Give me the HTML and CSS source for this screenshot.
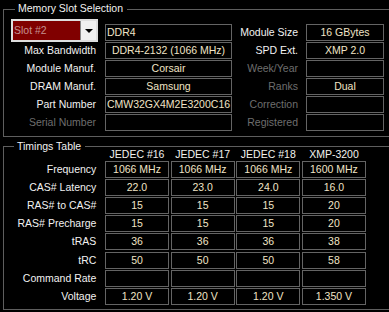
FILE: index.html
```html
<!DOCTYPE html>
<html lang="en">

<head>
    <meta charset="UTF-8">
    <meta name="viewport" content="width=device-width, initial-scale=1.0">
    <title>SPD</title>
    <link rel="stylesheet" href="styles.css">
</head>

<body>
    <!-- 内存插槽 -->
    <div class="group slot-group">
        <span class="group-title">Memory Slot Selection</span>
        <div class="slot-grid">
            <div class="slot-select">
                <span class="slot-value">Slot #2</span>
                <span class="slot-button"><span class="arrow"></span></span>
            </div>
            <div class="field align-left">DDR4</div>
            <div class="label">Module Size</div>
            <div class="field">16 GBytes</div>

            <div class="label">Max Bandwidth</div>
            <div class="field">DDR4-2132 (1066 MHz)</div>
            <div class="label">SPD Ext.</div>
            <div class="field">XMP 2.0</div>

            <div class="label">Module Manuf.</div>
            <div class="field">Corsair</div>
            <div class="label disabled">Week/Year</div>
            <div class="field"></div>

            <div class="label">DRAM Manuf.</div>
            <div class="field">Samsung</div>
            <div class="label disabled">Ranks</div>
            <div class="field">Dual</div>

            <div class="label">Part Number</div>
            <div class="field">CMW32GX4M2E3200C16</div>
            <div class="label disabled">Correction</div>
            <div class="field"></div>

            <div class="label disabled">Serial Number</div>
            <div class="field"></div>
            <div class="label disabled">Registered</div>
            <div class="field"></div>
        </div>
    </div>

    <!-- 时序表 -->
    <div class="group timing-group">
        <span class="group-title">Timings Table</span>
        <div class="timing-grid" id="timing-grid">
            <div></div>
            <div class="col-head">JEDEC #16</div>
            <div class="col-head">JEDEC #17</div>
            <div class="col-head">JEDEC #18</div>
            <div class="col-head">XMP-3200</div>
        </div>
    </div>

    <script>
        const timings = [
            ["Frequency", "1066 MHz", "1066 MHz", "1066 MHz", "1600 MHz"],
            ["CAS# Latency", "22.0", "23.0", "24.0", "16.0"],
            ["RAS# to CAS#", "15", "15", "15", "20"],
            ["RAS# Precharge", "15", "15", "15", "20"],
            ["tRAS", "36", "36", "36", "38"],
            ["tRC", "50", "50", "50", "58"],
            ["Command Rate", "", "", "", ""],
            ["Voltage", "1.20 V", "1.20 V", "1.20 V", "1.350 V"]
        ];

        const grid = document.getElementById('timing-grid');
        timings.forEach(row => {
            row.forEach((text, i) => {
                const cell = document.createElement('div');
                cell.classList.add(i === 0 ? 'label' : 'field');
                cell.textContent = text;
                grid.appendChild(cell);
            });
        });
    </script>
</body>

</html>
```

FILE: styles.css
```css
html,
body {
    margin: 0;
    overflow: hidden;
}

body {
    font-family: 'Liberation Sans', Arial, sans-serif;
    font-size: 10.5px;
    background-color: #000;
    color: #f2f2f2;
}

.group {
    position: relative;
    margin: 9px 0 0 3px;
    width: 400px;
    border: 1px solid #5e5e5e;
}

.group-title {
    position: absolute;
    left: 11px;
    top: -8px;
    padding: 0 4px 0 3px;
    line-height: 13px;
    background: #000;
    color: #f2f2f2;
}

.slot-group {
    padding: 14px 0 5px 0;
}

.slot-grid {
    display: grid;
    grid-template-columns: 101px 127px 74px 78px;
    grid-auto-rows: 17px;
    row-gap: 1px;
}

.label {
    text-align: right;
    line-height: 17px;
    padding-right: 9px;
    white-space: nowrap;
    color: #f2f2f2;
}

.slot-grid .label:nth-child(4n+3) {
    padding-right: 8px;
}

.label.disabled {
    color: #6e6e6e;
}

.field {
    border: 1px solid #646464;
    line-height: 15px;
    text-align: center;
    color: #f0e4c6;
    white-space: nowrap;
    overflow: hidden;
}

.field.align-left {
    text-align: left;
    padding-left: 1px;
}

/* 下拉框 */
.slot-select {
    display: flex;
    margin: -5px 0 -1px 7px;
    width: 87px;
    box-sizing: border-box;
    border: 2px solid #dedede;
    background: #800000;
}

.slot-value {
    flex: 1;
    padding-left: 1px;
    line-height: 18px;
    color: #c49090;
}

.slot-button {
    width: 15px;
    border-left: 1px solid #8a8a8a;
    background: #f0f0f0;
    display: flex;
    align-items: center;
    justify-content: center;
}

.arrow {
    width: 0;
    height: 0;
    border-left: 4px solid transparent;
    border-right: 4px solid transparent;
    border-top: 4px solid #000;
}

/* 时序表 */
.timing-group {
    padding: 0 0 4px 0;
}

.timing-group .group-title {
    left: 10px;
    top: -7px;
}

.timing-grid {
    display: grid;
    grid-template-columns: 99.33px repeat(4, 64px);
    grid-template-rows: 12.86px repeat(8, 17px);
    column-gap: 1.67px;
    row-gap: 1.14px;
}

.timing-grid .label {
    padding-right: 7px;
}

.col-head {
    text-align: center;
    line-height: 14px;
    white-space: nowrap;
    color: #f2f2ee;
}
```
